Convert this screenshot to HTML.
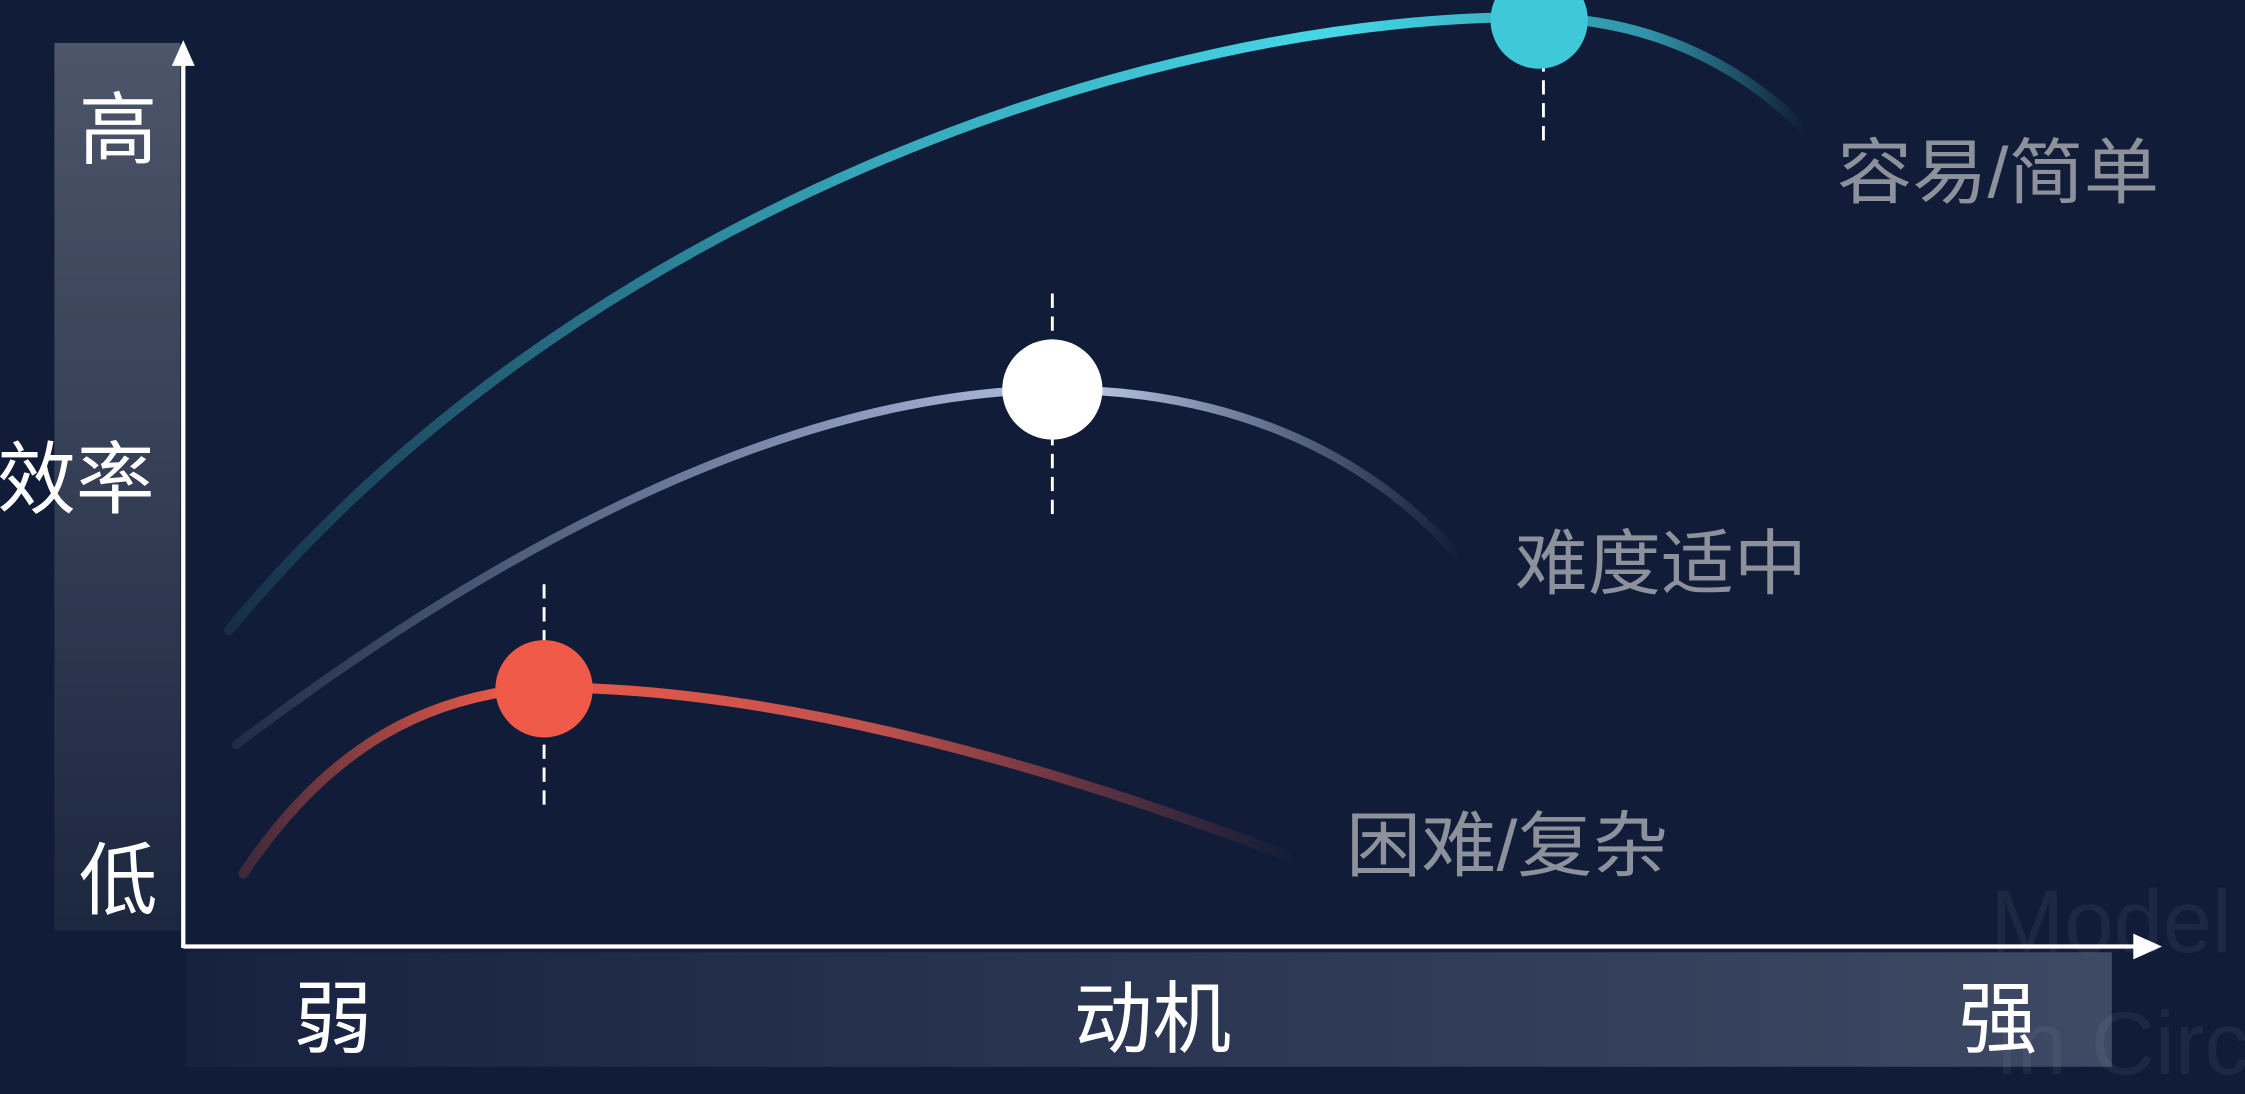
<!DOCTYPE html>
<html><head><meta charset="utf-8"><style>
html,body{margin:0;padding:0;background:#111d38;overflow:hidden}
svg{display:block}
text{font-family:"Liberation Sans","Noto Sans CJK SC",sans-serif}
</style></head><body>
<svg width="2245" height="1094" viewBox="0 0 1568 764" preserveAspectRatio="none" xmlns="http://www.w3.org/2000/svg">
<defs>
<linearGradient id="vb" x1="0" y1="0" x2="0" y2="1"><stop offset="0" stop-color="#4c5569"/><stop offset="1" stop-color="#1c2740"/></linearGradient>
<linearGradient id="hb" x1="0" y1="0" x2="1" y2="0"><stop offset="0" stop-color="#162240"/><stop offset="1" stop-color="#3e4a64"/></linearGradient>
<linearGradient id="cy" gradientUnits="userSpaceOnUse" x1="160" y1="0" x2="1260" y2="0"><stop offset="0" stop-color="#3ec8d8" stop-opacity="0.1"/><stop offset="0.4" stop-color="#3ec8d8" stop-opacity="0.8"/><stop offset="0.7" stop-color="#45d8e8"/><stop offset="0.9" stop-color="#3ec8d8" stop-opacity="0.7"/><stop offset="1" stop-color="#3ec8d8" stop-opacity="0"/></linearGradient>
<linearGradient id="wh" gradientUnits="userSpaceOnUse" x1="165" y1="0" x2="1020" y2="0"><stop offset="0" stop-color="#a8b6dc" stop-opacity="0.1"/><stop offset="0.5" stop-color="#a8b6dc" stop-opacity="0.8"/><stop offset="0.7" stop-color="#b8c4e4"/><stop offset="1" stop-color="#a8b6dc" stop-opacity="0"/></linearGradient>
<linearGradient id="rd" gradientUnits="userSpaceOnUse" x1="170" y1="0" x2="905" y2="0"><stop offset="0" stop-color="#f05a48" stop-opacity="0.2"/><stop offset="0.25" stop-color="#f05a48"/><stop offset="0.6" stop-color="#e05a50" stop-opacity="0.85"/><stop offset="1" stop-color="#c04848" stop-opacity="0"/></linearGradient>
</defs>
<rect x="38" y="30" width="88" height="620" fill="url(#vb)"/>
<rect x="130" y="665" width="1345" height="80" fill="url(#hb)"/>
<line x1="128" y1="38" x2="128" y2="662" stroke="#fff" stroke-width="3"/>
<path d="M120,46 L128,28 L136,46 Z" fill="#fff"/>
<line x1="128" y1="661" x2="1495" y2="661" stroke="#fff" stroke-width="3"/>
<path d="M1490,652 L1510,661 L1490,670 Z" fill="#fff"/>
<path d="M160,440 C400,150 800,10 1075,12 C1160,14 1220,50 1260,90" fill="none" stroke="url(#cy)" stroke-width="7" stroke-linecap="round"/>
<path d="M165,520 C350,380 550,275 735,272 C850,272 950,310 1020,390" fill="none" stroke="url(#wh)" stroke-width="6" stroke-linecap="round"/>
<path d="M170,610 C230,520 300,485 380,480 C550,480 750,540 905,600" fill="none" stroke="url(#rd)" stroke-width="7" stroke-linecap="round"/>
<g stroke="#fff" stroke-width="2" stroke-dasharray="10,6">
<line x1="1078" y1="40" x2="1078" y2="100"/>
<line x1="735" y1="205" x2="735" y2="365"/>
<line x1="380" y1="408" x2="380" y2="567"/>
</g>
<circle cx="1075" cy="14" r="34" fill="#3ec8d8"/>
<circle cx="735" cy="272" r="35" fill="#fff"/>
<circle cx="380" cy="481" r="34" fill="#f05a48"/>
<g fill="#8c919b" font-size="50">
<text x="1283" y="138" textLength="225" lengthAdjust="spacingAndGlyphs">容易/简单</text>
<text x="1058" y="411" textLength="204" lengthAdjust="spacingAndGlyphs">难度适中</text>
<text x="940" y="608" textLength="225" lengthAdjust="spacingAndGlyphs">困难/复杂</text>
</g>
<g fill="#fff" font-size="55">
<text x="55" y="110">高</text>
<text x="-2" y="354">效率</text>
<text x="55" y="634">低</text>
<text x="205" y="731">弱</text>
<text x="750" y="731">动机</text>
<text x="1368" y="731">强</text>
</g>
<g fill="#fff" fill-opacity="0.05" font-size="62">
<text x="1390" y="665">Model</text>
<text x="1395" y="750">in Circ</text>
</g>
</svg>
</body></html>
